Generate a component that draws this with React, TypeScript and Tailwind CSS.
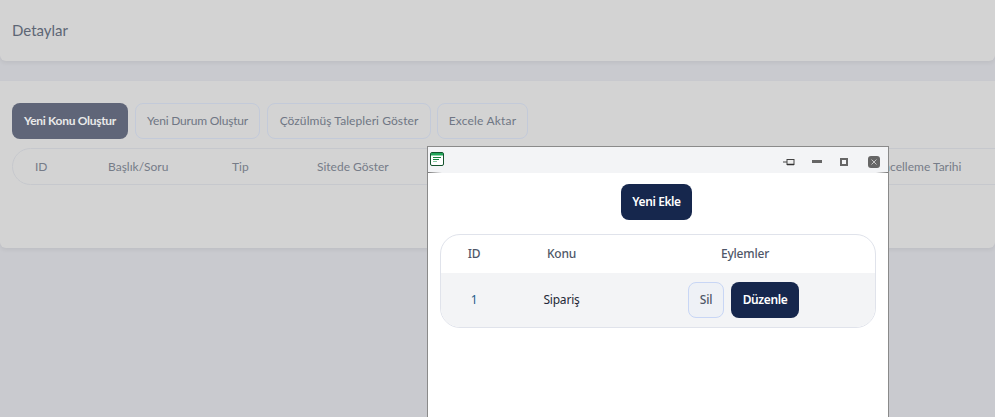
const bgFont = "font-['Lato','Inter',sans-serif]";

function GhostButton({ label, width }: { label: string; width: string }) {
  return (
    <button className={`${width} h-9 rounded-lg border border-[#c3cad9] text-xs text-[#6f7684] flex items-center justify-center`}>
      {label}
    </button>
  );
}

function SheetIcon() {
  return (
    <svg width="14" height="14" viewBox="0 0 14 14" className="-mt-[2px]">
      <rect x="0.5" y="0.5" width="13" height="13" rx="1.5" fill="#fff" stroke="#14532d" />
      <rect x="1" y="1" width="12" height="2.5" fill="#22a559" />
      <rect x="3" y="5" width="8" height="1" fill="#15803d" />
      <rect x="3" y="7" width="6" height="1" fill="#15803d" />
      <rect x="3" y="9" width="4" height="1" fill="#86c9a0" />
    </svg>
  );
}

function WindowControls() {
  return (
    <div className="flex items-center mt-[3px]">
      <svg width="12" height="8" viewBox="0 0 12 8" className="mr-[17px]">
        <path d="M0 4h4" stroke="#444" strokeWidth="1" />
        <rect x="4" y="1.5" width="7" height="5" fill="#eee" stroke="#444" />
        <path d="M4 6.5h7" stroke="#333" strokeWidth="1.5" />
      </svg>
      <div className="w-[10px] h-[3px] bg-[#666] mr-[18px]" />
      <div className="w-2 h-2 border-2 border-[#666] mr-[20px]" />
      <div className="w-3 h-3 rounded-[3px] bg-[#666] flex items-center justify-center">
        <svg width="6" height="6" viewBox="0 0 6 6">
          <path d="M0.5 0.5l5 5M5.5 0.5l-5 5" stroke="#ddd" strokeWidth="0.8" />
        </svg>
      </div>
    </div>
  );
}

function TopicsWindow() {
  return (
    <div className="absolute left-[427px] top-[146px] w-[462px] h-[280px] bg-white border-l border-r border-t border-[#8a8a8a] font-['Noto_Sans',sans-serif]">
      <div className="relative h-[26px] bg-[#f3f4f6] flex items-center justify-between pl-[2px] pr-[8px]">
        <SheetIcon />
        <WindowControls />
        <div className="absolute left-0 bottom-0 w-[14px] h-px bg-gradient-to-r from-[#777] to-transparent" />
        <div className="absolute right-0 bottom-0 w-[12px] h-px bg-gradient-to-l from-[#777] to-transparent" />
      </div>
      <div className="flex flex-col items-center pt-[11px] px-3">
        <button className="h-9 w-[71px] -ml-[3px] rounded-lg bg-[#16274d] text-white text-xs font-semibold tracking-[-0.4px]">Yeni Ekle</button>
        <div className="w-full mt-[14px] border border-[#e0e3eb] rounded-[20px] overflow-hidden">
          <div className="h-[38px] flex items-center text-xs font-medium text-[#4f5768] tracking-[-0.2px]">
            <div className="w-[66px] text-center">ID</div>
            <div className="w-[109px] text-center">Konu</div>
            <div className="w-[258px] text-center">Eylemler</div>
          </div>
          <div className="h-[54px] bg-[#f3f4f6] flex items-center text-xs text-[#1f2937] tracking-[-0.2px]">
            <div className="w-[66px] text-center text-[#1d5c8a]">1</div>
            <div className="w-[109px] text-center">Sipariş</div>
            <div className="flex items-center gap-[7px] pl-[72px]">
              <button className="h-9 w-9 rounded-lg border border-[#c8d6f5] bg-[#eef1f6] text-[#4f5768] text-xs font-medium">Sil</button>
              <button className="h-9 w-[68px] rounded-lg bg-[#16274d] text-white text-xs font-semibold tracking-[-0.4px]">Düzenle</button>
            </div>
          </div>
        </div>
      </div>
    </div>
  );
}

export default function App() {
  return (
    <div className="relative w-[995px] h-[417px] overflow-hidden bg-[#c9cacf]">
      <div className={`${bgFont} flex flex-col gap-5`}>
        <div className="h-[61px] bg-[#d3d3d3] rounded-b-md shadow-[0_2px_4px_rgba(0,0,0,0.06)] flex items-center px-3">
          <h1 className="text-[15px] text-[#5d6675]">Detaylar</h1>
        </div>
        <div className="h-[167px] bg-[#d3d3d3] rounded-b-md shadow-[0_2px_4px_rgba(0,0,0,0.06)] overflow-hidden pt-[22px] pl-3">
          <div className="flex gap-[7px]">
            <button className="w-[116px] h-9 rounded-lg bg-[#5f6578] text-xs text-[#e9e9e9] font-bold tracking-[-0.3px]">Yeni Konu Oluştur</button>
            <GhostButton label="Yeni Durum Oluştur" width="w-[125px] tracking-[-0.2px]" />
            <GhostButton label="Çözülmüş Talepleri Göster" width="w-[164px] tracking-[0.08px]" />
            <div className="-ml-px">
              <GhostButton label="Excele Aktar" width="w-[91px] tracking-[0.2px]" />
            </div>
          </div>
          <div className="mt-[9px] w-[1100px] h-[37px] rounded-l-full border border-[#c6c8cd] flex items-center text-xs text-[#767c88]">
            <div className="w-[95px] pl-[22px]">ID</div>
            <div className="w-[124px]">Başlık/Soru</div>
            <div className="w-[85px]">Tip</div>
            <div className="w-[440px]">Sitede Göster</div>
            <div className="pl-[111px]">Güncelleme Tarihi</div>
          </div>
        </div>
      </div>
      <TopicsWindow />
    </div>
  );
}
